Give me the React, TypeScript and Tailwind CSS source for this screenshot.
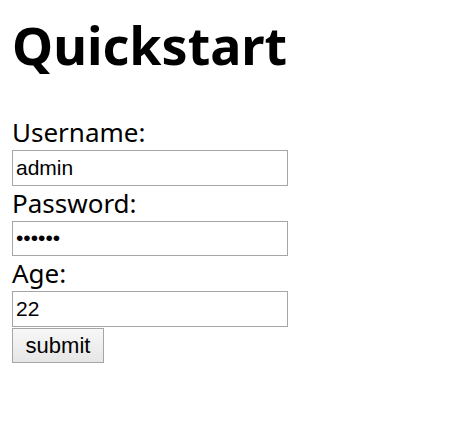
export default function App() {
  return (
    <div className="min-h-screen bg-white px-3 text-black" style={{ fontFamily: '"Noto Sans", sans-serif' }}>
      <h1 className="pt-[9px] text-[52px] font-bold leading-[71px]">Quickstart</h1>
      <form className="mt-[35px] flex flex-col items-start" onSubmit={(e) => e.preventDefault()}>
        <label htmlFor="username" className="text-[26px] leading-[35px]">Username:</label>
        <input
          id="username"
          type="text"
          defaultValue="admin"
          className="h-[35.5px] w-[276px] border border-[#a6a6a6] px-[3px] font-['Liberation_Sans',sans-serif] text-[21px] outline-none"
        />
        <label htmlFor="password" className="text-[26px] leading-[35px]">Password:</label>
        <input
          id="password"
          type="password"
          defaultValue="123456"
          className="h-[35.5px] w-[276px] border border-[#a6a6a6] px-[3px] font-['Liberation_Sans',sans-serif] text-[21px] outline-none"
        />
        <label htmlFor="age" className="text-[26px] leading-[35px]">Age:</label>
        <input
          id="age"
          type="text"
          defaultValue="22"
          className="h-[35.5px] w-[276px] border border-[#a6a6a6] px-[3px] font-['Liberation_Sans',sans-serif] text-[21px] outline-none"
        />
        <button
          type="submit"
          className="mt-px h-[35px] w-[92px] border border-[#a6a6a6] bg-gradient-to-b from-[#f7f7f7] to-[#e6e6e6] font-['Liberation_Sans',sans-serif] text-[22px]"
        >
          submit
        </button>
      </form>
    </div>
  );
}
